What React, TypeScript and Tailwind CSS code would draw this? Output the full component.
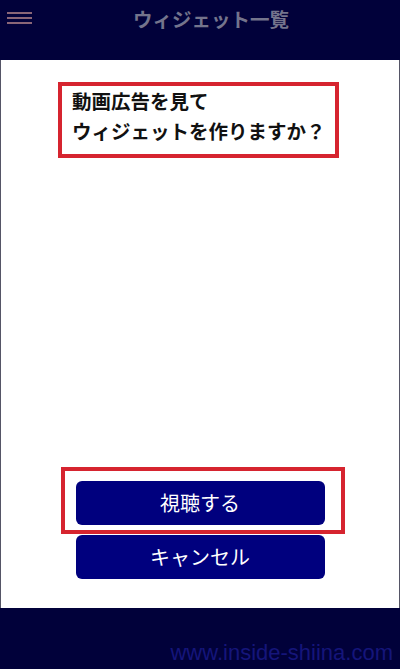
import React from 'react';

const jp = { fontFamily: '"Noto Sans CJK JP", "Noto Sans", sans-serif' };

function Hamburger() {
  return (
    <div className="ml-[7px] mt-[12px] flex w-[25px] flex-col gap-[3px]">
      <span className="h-[2px] w-full bg-[#8a6677]" />
      <span className="h-[2px] w-full bg-[#8a6677]" />
      <span className="h-[2px] w-full bg-[#8a6677]" />
    </div>
  );
}

export default function App() {
  return (
    <div className="flex h-[669px] w-[400px] flex-col bg-[#01013a]" style={jp}>
      {/* ヘッダー */}
      <header className="flex h-[60px] shrink-0 items-start bg-[#01013a]">
        <Hamburger />
        <h1 className="ml-[101px] mt-[5px] text-[19.5px] font-semibold leading-[28px] text-[#74748c]">
          ウィジェット一覧
        </h1>
      </header>

      {/* 本文 */}
      <main className="flex flex-1 flex-col border-x border-[#555566] bg-white">
        <div className="ml-[57px] mt-[22px] w-[281px] border-[4px] border-[#d6242f] pb-[8px] pl-[10px]">
          <p className="whitespace-nowrap text-[19.5px] font-bold leading-[30px] text-[#111111]">
            動画広告を見て
            <br />
            ウィジェットを作りますか？
          </p>
        </div>

        <div className="flex-1" />

        <div className="relative mx-auto flex w-[249px] flex-col gap-[10px] pb-[29px]">
          <button className="h-[44px] rounded-[6px] bg-[#00007e] text-[20px] text-white">視聴する</button>
          <button className="h-[44px] rounded-[6px] bg-[#00007e] text-[20px] text-white">キャンセル</button>
          {/* 注釈の赤枠 */}
          <div className="pointer-events-none absolute left-[-15px] top-[-14px] h-[67px] w-[284px] border-[4px] border-[#d6242f]" />
        </div>
      </main>

      {/* フッター */}
      <footer className="flex h-[61px] shrink-0 items-end justify-end bg-[#01013a] pb-[3px] pr-[7px]">
        <span
          className="text-[22px] leading-[26px] text-[#15157a]"
          style={{ fontFamily: '"Liberation Sans", Arial, sans-serif' }}
        >
          www.inside-shiina.com
        </span>
      </footer>
    </div>
  );
}
